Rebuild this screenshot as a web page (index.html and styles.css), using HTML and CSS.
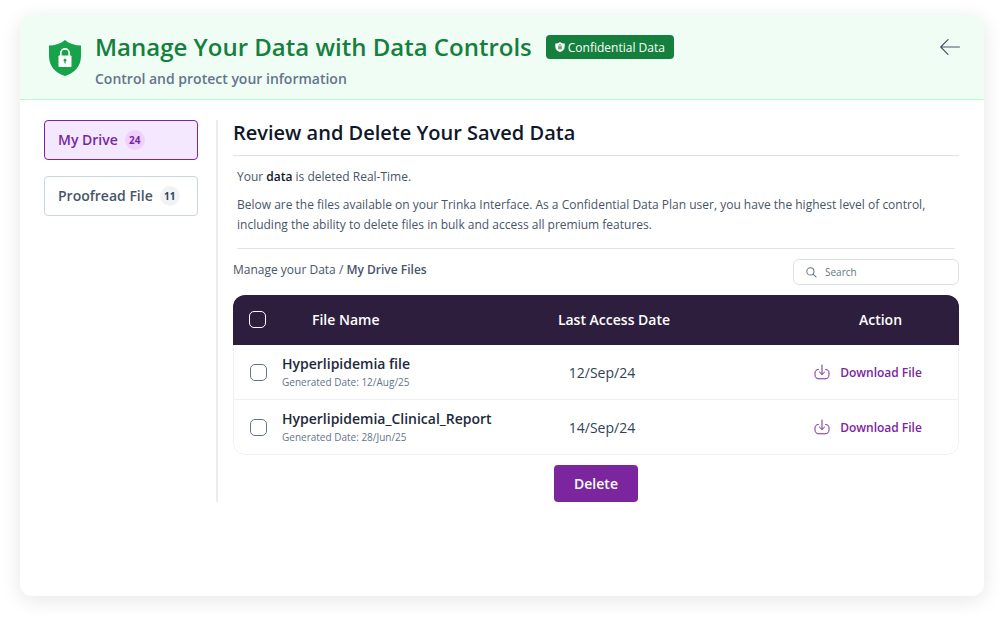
FILE: index.html
```html
<!DOCTYPE html>
<html lang="en">
<head>
<meta charset="utf-8">
<meta name="viewport" content="width=device-width, initial-scale=1">
<title>Data Controls</title>
<link rel="stylesheet" href="styles.css">
</head>
<body>
<main class="card">
  <header class="card-header">
    <svg class="shield" viewBox="0 0 34 38" aria-hidden="true">
      <path fill="#16a34a" d="M17 1C13 4.600 7 6.500 1 6.500V17C1 27.500 8 34.500 17 37C26 34.500 33 27.500 33 17V6.500C27 6.500 21 4.600 17 1Z"/>
      <path fill="none" stroke="#fff" stroke-width="1.700" d="M12.800 17.500V14a4.200 4.200 0 0 1 8.400 0v3.500"/>
      <rect x="10.500" y="16.500" width="13" height="11.500" rx="0.800" fill="#fff"/>
      <circle cx="17" cy="21.200" r="1.400" fill="#16a34a"/>
      <path stroke="#16a34a" stroke-width="1.100" d="M17 21v3.400"/>
    </svg>
    <div class="heading">
      <div class="title-row">
        <h1 class="title">Manage Your Data with Data Controls</h1>
        <span class="badge">
          <svg class="badge-icon" viewBox="0 0 10 10" aria-hidden="true">
            <path fill="#fff" d="M5 0C3.700 1 2 1.500 0.300 1.500V4.500C0.300 7.300 2.200 9.200 5 10C7.800 9.200 9.700 7.300 9.700 4.500V1.500C8 1.500 6.300 1 5 0Z"/>
            <path fill="none" stroke="#15803d" stroke-width="0.600" d="M3.900 4.500V3.600a1.100 1.100 0 0 1 2.200 0v0.900"/>
            <rect x="3.200" y="4.300" width="3.600" height="3" fill="#15803d" opacity="0.700"/>
          </svg>
          Confidential Data
        </span>
      </div>
      <p class="subtitle">Control and protect your information</p>
    </div>
    <button class="back" type="button" aria-label="Back">
      <svg class="back-icon" viewBox="0 0 20 16" aria-hidden="true"><path fill="none" stroke="#475569" stroke-width="1.200" stroke-linecap="round" stroke-linejoin="round" d="M19.400 8H0.700M8 0.700L0.700 8L8 15.300"/></svg>
    </button>
  </header>

  <div class="card-body">
    <nav class="tabs" aria-label="File sources">
      <button class="tab tab-active" type="button">My Drive <span class="count">24</span></button>
      <button class="tab" type="button">Proofread File <span class="count">11</span></button>
    </nav>

    <section class="content">
      <h2 class="section-title">Review and Delete Your Saved Data</h2>
      <div class="intro">
        <p>Your <strong>data</strong> is deleted Real-Time.</p>
        <p>Below are the files available on your Trinka Interface. As a Confidential Data Plan user, you have the highest level of control, including the ability to delete files in bulk and access all premium features.</p>
      </div>
      <div class="toolbar">
        <div class="crumbs">Manage your Data / <strong>My Drive Files</strong></div>
        <label class="search">
          <svg class="search-icon" viewBox="0 0 12 12" aria-hidden="true"><g fill="none" stroke="#64748b" stroke-width="1.100"><circle cx="4.800" cy="4.800" r="3.900"/><path d="M7.600 7.600L11.300 11.300"/></g></svg>
          <input class="search-input" type="search" placeholder="Search" aria-label="Search">
        </label>
      </div>
      <div class="table-wrap">
        <table class="files">
          <thead>
            <tr>
              <th class="col-check"><input class="check check-light" type="checkbox" aria-label="Select all files"></th>
              <th class="col-name">File Name</th>
              <th class="col-date">Last Access Date</th>
              <th class="col-action">Action</th>
            </tr>
          </thead>
          <tbody>
            <tr>
              <td class="col-check"><input class="check" type="checkbox" id="file-1"></td>
              <td class="cell-name"><label class="file-name" for="file-1">Hyperlipidemia file</label><div class="file-meta">Generated Date: 12/Aug/25</div></td>
              <td class="cell-date">12/Sep/24</td>
              <td class="cell-action"><a class="download" href="#"><svg class="download-icon" viewBox="0 0 16 16" aria-hidden="true"><path fill="none" stroke="#7b269e" stroke-linecap="round" stroke-linejoin="round" d="M8 1v9.300M5.400 8L8 10.500L10.600 8M4.300 5.500C2 5.500 1 7 1 9v1.500C1 13.500 2.300 14.800 5 14.800H11C13.700 14.800 15 13.500 15 10.500V9C15 7 14 5.500 11.700 5.500"/></svg>Download File</a></td>
            </tr>
            <tr>
              <td class="col-check"><input class="check" type="checkbox" id="file-2"></td>
              <td class="cell-name"><label class="file-name" for="file-2">Hyperlipidemia_Clinical_Report</label><div class="file-meta">Generated Date: 28/Jun/25</div></td>
              <td class="cell-date">14/Sep/24</td>
              <td class="cell-action"><a class="download" href="#"><svg class="download-icon" viewBox="0 0 16 16" aria-hidden="true"><path fill="none" stroke="#7b269e" stroke-linecap="round" stroke-linejoin="round" d="M8 1v9.300M5.400 8L8 10.500L10.600 8M4.300 5.500C2 5.500 1 7 1 9v1.500C1 13.500 2.300 14.800 5 14.800H11C13.700 14.800 15 13.500 15 10.500V9C15 7 14 5.500 11.700 5.500"/></svg>Download File</a></td>
            </tr>
          </tbody>
        </table>
      </div>
      <button class="delete" type="button">Delete</button>
    </section>
  </div>
</main>
</body>
</html>
```
FILE: styles.css
```css
* { box-sizing: border-box; }
body {
  margin: 0;
  min-height: 100vh;
  padding: 15px 20px 24px;
  display: flex;
  flex-direction: column;
  background: #fff;
  color: #475569;
  font-family: "Open Sans", "Noto Sans", sans-serif;
  font-size: 12px;
}
h1, h2, p { margin: 0; }
button, input { font: inherit; color: inherit; }
button { cursor: pointer; }

.card {
  flex: 1;
  background: #fff;
  border-radius: 12px;
  box-shadow: 0 4px 20px rgba(0, 0, 0, 0.1);
}
.card-header {
  display: flex;
  align-items: flex-start;
  padding: 16px 24px 10px 28px;
  background: #f0fdf4;
  border-bottom: 1px solid #bbf7d0;
  border-radius: 12px 12px 0 0;
}
.shield { width: 34px; height: 38px; margin: 8px 13px 0 0; flex: none; }
.heading { flex: 1; }
.title-row { display: flex; align-items: center; gap: 14px; }
.title { font-size: 24px; line-height: 32px; font-weight: 600; color: #15803d; }
.badge {
  display: flex;
  align-items: center;
  gap: 3px;
  height: 24px;
  padding: 0 9px;
  border-radius: 4px;
  background: #15803d;
  color: #fff;
  font-weight: 500;
}
.badge-icon { width: 10px; height: 10px; }
.subtitle { font-size: 14px; line-height: 20px; margin-top: 6px; font-weight: 600; color: #64748b; }
.back { display: flex; border: 0; padding: 8px 0; background: none; }
.back-icon { width: 20px; height: 16px; }

.card-body { display: flex; padding: 20px 25px 20px 24px; }
.tabs { display: flex; flex-direction: column; gap: 16px; width: 154px; margin-right: 18px; flex: none; }
.tab {
  display: flex;
  align-items: center;
  gap: 7px;
  height: 40px;
  padding: 0 13px 1px;
  border: 1px solid #cbd5e1;
  border-radius: 4px;
  background: #fff;
  color: #475569;
  font-size: 14px;
  font-weight: 600;
}
.tab-active { background: #f3e8ff; border-color: #7b269e; color: #7b269e; }
.count {
  display: grid;
  place-items: center;
  width: 20px;
  height: 20px;
  border-radius: 50%;
  background: #f1f2f6;
  color: #334155;
  font-size: 10px;
  font-weight: 700;
}
.tab-active .count { background: #f0d0ff; color: #7b269e; }

.content {
  flex: 1;
  min-width: 0;
  display: flex;
  flex-direction: column;
  padding-left: 15px;
  border-left: 2px solid #ecedf3;
}
.section-title {
  padding-bottom: 9px;
  border-bottom: 1px solid #dde1e9;
  font-size: 20px;
  line-height: 26px;
  font-weight: 600;
  color: #0f172a;
}
.intro {
  display: flex;
  flex-direction: column;
  gap: 8px;
  margin: 0 4px;
  padding: 11px 0 13px;
  border-bottom: 1px solid #dde1e9;
  line-height: 20px;
}
.intro strong { font-weight: 600; color: #0f172a; }
.toolbar { display: flex; justify-content: space-between; align-items: flex-start; padding: 10px 0; }
.crumbs { line-height: 22px; }
.crumbs strong { font-weight: 600; }
.search {
  display: flex;
  align-items: center;
  gap: 8px;
  width: 166px;
  height: 26px;
  padding: 0 12px;
  border: 1px solid #dde1e9;
  border-radius: 6px;
}
.search-icon { width: 11px; height: 11px; flex: none; }
.search-input { min-width: 0; flex: 1; border: 0; padding: 0; outline: 0; background: none; font-size: 10px; }
.search-input::placeholder { color: #64748b; opacity: 1; }

.table-wrap { border-radius: 12px; overflow: hidden; }
.files { width: 100%; border-collapse: separate; border-spacing: 0; table-layout: fixed; }
.files th { height: 50px; padding: 0 0 1px; background: #2e1e3e; color: #fff; font-size: 14px; font-weight: 600; text-align: center; }
.files td { height: 55px; padding: 0; border-bottom: 1px solid #eff0f3; }
.files td:first-child { border-left: 1px solid #f0f1f5; }
.files td:last-child { border-right: 1px solid #f0f1f5; }
.files tbody tr:last-child td:first-child { border-bottom-left-radius: 12px; }
.files tbody tr:last-child td:last-child { border-bottom-right-radius: 12px; }
.files .col-check { width: 49px; text-align: center; }
.files .col-name { width: 226px; padding-left: 30px; text-align: left; }
.files .col-date { width: 212px; }
.files .col-action { padding-left: 82px; }
.check {
  appearance: none;
  display: block;
  width: 17px;
  height: 17px;
  margin: 0 auto;
  border: 1px solid #64748b;
  border-radius: 5px;
}
.check-light { border-color: #fff; }
.check:checked { background: #7b269e; }
.file-name { display: block; font-size: 14px; line-height: 20px; font-weight: 600; color: #1e293b; }
.file-meta { font-size: 10px; line-height: 16px; color: #64748b; }
.files .cell-date { padding-right: 24px; font-size: 14px; color: #334155; text-align: center; }
.files .cell-action { padding-left: 58px; }
.download {
  display: flex;
  align-items: center;
  justify-content: center;
  gap: 10px;
  color: #7b269e;
  font-weight: 600;
  text-decoration: none;
}
.download-icon { width: 16px; height: 16px; }
.delete {
  align-self: center;
  height: 37px;
  margin-top: 10px;
  padding: 0 20px;
  border: 0;
  border-radius: 4px;
  background: #7b269e;
  color: #fff;
  font-size: 14px;
  font-weight: 600;
}
```
